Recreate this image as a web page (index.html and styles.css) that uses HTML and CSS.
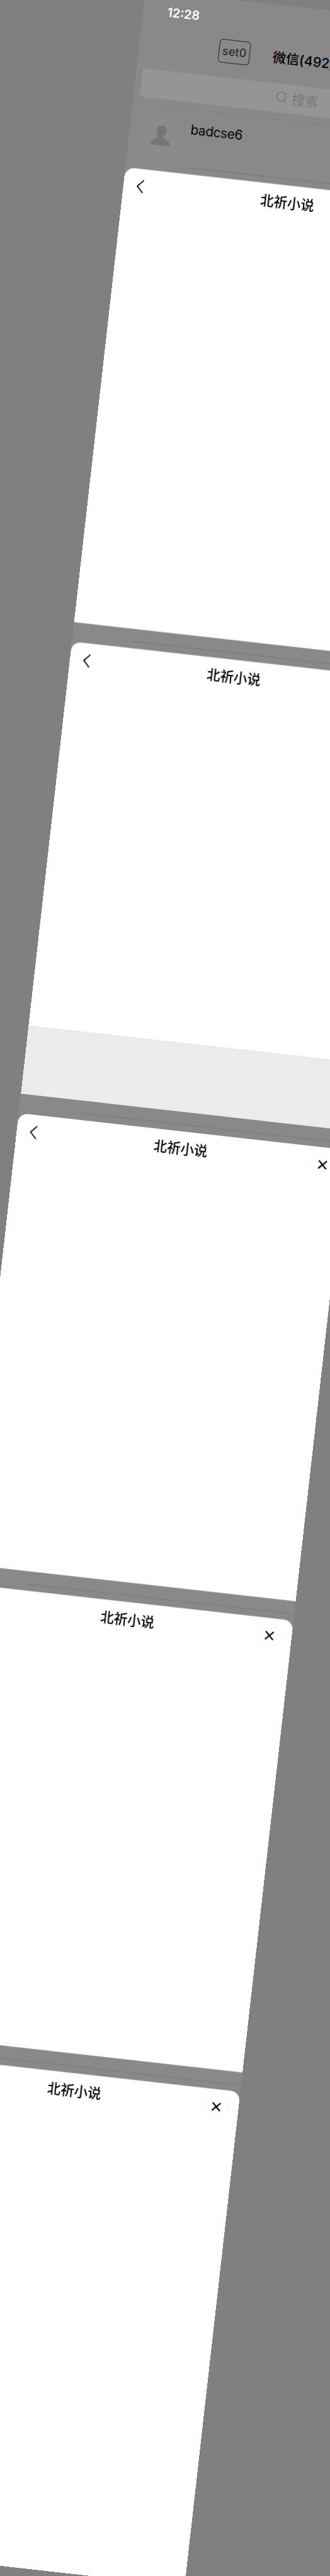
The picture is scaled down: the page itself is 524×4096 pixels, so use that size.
FILE: index.html
```html
<!DOCTYPE html>
<html lang="zh-CN">
<head>
<meta charset="utf-8">
<title>北祈小说</title>
<link rel="stylesheet" href="styles.css">
</head>
<body>
<main class="canvas">
<div class="phone">
  <header class="status"><span>12:28</span></header>
  <div class="titlebar">
    <span class="setbox">set0</span>
    <h1 class="chats">微信(492)</h1>
  </div>
  <div class="search">
    <svg class="lens" width="30" height="30" viewBox="0 0 30 30"><circle cx="13" cy="13" r="11.5"/><path d="M20.5 21.5L27.500 27.500"/></svg>
    <span>搜索</span>
  </div>
  <div class="chat">
    <div class="avatar">
      <svg width="52" height="52" viewBox="0 0 52 52"><path d="M26 1C18 1 13.500 6.500 13.500 14C13.500 20 16.500 24 20 27.500V30.500C16 35 2 38 1.500 47.500V50.500H50.500V47.500C50 38 36 35 32 30.500V27.500C35.500 24 38.500 20 38.500 14C38.500 6.500 34 1 26 1Z"/></svg>
    </div>
    <span class="name">badcse6</span>
  </div>
  <div class="gap first"></div>
  <section class="sheet s1">
    <svg class="back" viewBox="0 0 20 36"><path d="M17 2L2 18L17 34"/></svg>
    <h2>北祈小说</h2>
    <span class="close"><svg viewBox="0 0 24 24"><path d="M2 2L22 22M22 2L2 22"/></svg></span>
  </section>
  <div class="gap"></div>
  <section class="sheet s2">
    <svg class="back" viewBox="0 0 20 36"><path d="M17 2L2 18L17 34"/></svg>
    <h2>北祈小说</h2>
    <span class="close"><svg viewBox="0 0 24 24"><path d="M2 2L22 22M22 2L2 22"/></svg></span>
  </section>
  <div class="footer"></div>
  <div class="gap"></div>
  <section class="sheet s3">
    <svg class="back" viewBox="0 0 20 36"><path d="M17 2L2 18L17 34"/></svg>
    <h2>北祈小说</h2>
    <span class="close"><svg viewBox="0 0 24 24"><path d="M2 2L22 22M22 2L2 22"/></svg></span>
  </section>
  <div class="gap"></div>
  <section class="sheet s4">
    <svg class="back" viewBox="0 0 20 36"><path d="M17 2L2 18L17 34"/></svg>
    <h2>北祈小说</h2>
    <span class="close"><svg viewBox="0 0 24 24"><path d="M2 2L22 22M22 2L2 22"/></svg></span>
  </section>
  <div class="gap"></div>
  <section class="sheet s5">
    <svg class="back" viewBox="0 0 20 36"><path d="M17 2L2 18L17 34"/></svg>
    <h2>北祈小说</h2>
    <span class="close"><svg viewBox="0 0 24 24"><path d="M2 2L22 22M22 2L2 22"/></svg></span>
  </section>
</div>
</main>
</body>
</html>
```

FILE: styles.css
```css
* { box-sizing: border-box; }
html, body { margin: 0; width: 524px; height: 4096px; overflow: hidden; background: #808080; }
body { font-family: Inter, "Noto Sans CJK SC", sans-serif; color: #000; }
.canvas { width: 828px; height: 6476px; overflow: hidden; transform: scale(.63285, .63249); transform-origin: 0 0; }
.phone { display: flex; flex-direction: column; width: 828px; height: 6476px; background: #898989; transform: rotate(6.425deg); }

.status { height: 101px; padding: 30px 0 0 61px; color: #fff; font-size: 31px; line-height: 40px; font-weight: 600; }
.titlebar { display: flex; height: 96px; padding-left: 200px; }
.setbox { width: 79px; height: 60px; border: 2px solid #3e3c18; border-radius: 9px; text-align: center; font-size: 29px; line-height: 56px; font-weight: 500; color: #303030; }
.chats { margin: 0 0 0 57px; font-size: 34px; line-height: 64px; font-weight: 500; letter-spacing: -.3px; white-space: nowrap; }
.search { display: flex; align-items: center; justify-content: center; gap: 10px; height: 72px; margin: 0 16px; padding-right: 10px; border-radius: 8px; background: #959595; color: #757575; font-size: 33px; line-height: 50px; }
.lens { margin-bottom: 4px; fill: none; stroke: #757575; stroke-width: 2.5; }

.chat { display: flex; height: 145px; margin-top: 18px; padding: 24px 0 0 32px; border-top: 1.5px solid #7b7b7b; }
.avatar { display: flex; align-items: center; justify-content: center; width: 96px; height: 96px; border-radius: 8px; background: #8b8b8b; }
.avatar svg { fill: #757575; }
.name { margin-left: 24px; font-size: 33px; line-height: 49px; letter-spacing: -.6px; }

/* Strip of the dimmed list between two sheets */
.gap { height: 49px; padding: 31px 0 0 152px; flex: none; }
.gap::after { content: ""; display: block; height: 1.5px; background: #7b7b7b; }
.gap.first { height: 17px; padding-top: 0; }

.sheet { display: flex; justify-content: space-between; align-items: flex-start; flex: none; padding: 13px 25px 0 33px; border-radius: 24px 24px 0 0; background: #fff; }
.s1 { height: 1151px; }
.s2 { height: 973px; }
.s3 { height: 1142px; }
.s4 { height: 1143px; }
.s5 { height: 1251px; }
.footer { flex: none; height: 171px; background: #ebebeb; }
.back { width: 20px; height: 36px; margin: 13px 33px 0 0; fill: none; stroke: #111; stroke-width: 3; }
.sheet h2 { margin: 0; font-size: 34px; line-height: 61px; font-weight: 500; }
.close { display: flex; align-items: center; justify-content: center; width: 62px; height: 62px; border: 1.5px solid #efefef; border-radius: 50%; }
.close svg { width: 24px; height: 24px; fill: none; stroke: #000; stroke-width: 3.6; }
```
